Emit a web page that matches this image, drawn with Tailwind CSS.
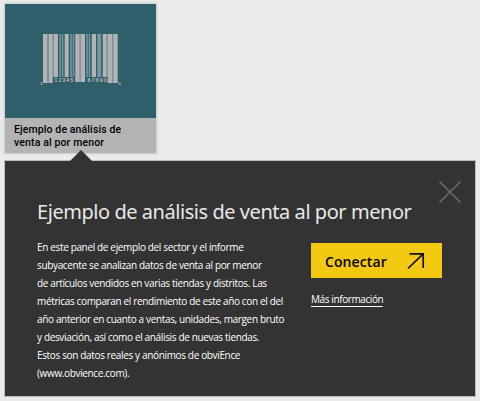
<!DOCTYPE html>
<html lang="es">
<head>
<meta charset="utf-8">
<title>Ejemplo de análisis de venta al por menor</title>
<script src="https://cdn.jsdelivr.net/npm/@tailwindcss/browser@4"></script>
</head>
<body class="h-[401px] w-[480px] overflow-hidden bg-[#eaeaea] pl-[5px] pt-[4px] font-['Open_Sans',sans-serif]">
<article class="h-[149px] w-[151px] bg-[#b3b3b3] shadow-[0_0_2px_1px_#c9cccc]">
  <div class="h-[114px] bg-[#2f5f6b]">
    <svg class="block h-[114px] w-[151px]" viewBox="5 4 151 114">
      <g fill="#7897a0">
        <path d="M47 34h1.7v49H47zM52.7 34H54v43h-1.3zM59.5 34h1.6v43h-1.6zM62 34h1.3v43H62zM70.3 34h1.5v43h-1.5zM72.7 34h1.5v43h-1.5zM86.3 34h1.5v43h-1.5zM88.7 34h1.5v43h-1.5zM97.3 34h3.8v43h-3.8zM79.7 34H81v48h-1.3zM106.7 34h1v43h-1zM112 34h1.3v49H112z"/>
      </g>
      <g fill="#b3b3b3">
        <path d="M43 34h4v49h-4zM48.7 34h4v49h-4zM54 34h4v43h-4zM64.7 34h4v43h-4zM75.3 34h4.4v48h-4.4zM81 34h4v48h-4zM91.8 34h4.2v43h-4.2zM102.7 34h4v43h-4zM107.7 34H112v49h-4.3zM113.3 34h4.4v49h-4.4z"/>
        <g font-family="Liberation Sans, sans-serif" font-size="5.2" stroke="#b3b3b3" stroke-width=".2">
          <text x="40.2" y="85.3" font-size="4">1</text>
          <text x="54.6" y="81.8" textLength="18.5">12345</text>
          <text x="87.6" y="81.8" textLength="19">67890</text>
          <text x="118.6" y="85.3" font-size="4">0</text>
        </g>
      </g>
    </svg>
  </div>
  <h2 class="whitespace-nowrap pl-[9px] pt-[5px] font-[Roboto,sans-serif] text-[10.5px] font-medium leading-[13px] text-black"><span class="tracking-[0.11px]">Ejemplo de análisis de</span><br><span class="tracking-[0.13px]">venta al por menor</span></h2>
</article>
<svg class="relative z-10 ml-[65px] -mt-[4px] block h-[12px] w-[22px]" viewBox="0 0 22 12"><path d="M0 12 11 1l11 11z" fill="#333"/></svg>
<section class="relative h-[235px] w-[470px] bg-[#333] pl-[32px] pt-[37px] text-white shadow-[0_0_0_1px_#bbbdbd]">
  <button aria-label="Cerrar" class="absolute left-[433px] top-[19px]"><svg class="block size-6" viewBox="0 0 24 24"><path d="M1.5 1.5l21 21m0-21l-21 21" fill="none" stroke="#6b6b6b" stroke-width="1.7"/></svg></button>
  <h1 class="h-[28px] whitespace-nowrap font-['Noto_Sans',sans-serif] text-[20px] font-normal leading-[28px] tracking-[-0.45px] text-[#e8e8e8]">Ejemplo de análisis de venta al por menor</h1>
  <div class="flex pt-[12px]">
    <p class="w-[274px] whitespace-nowrap text-[10px] leading-[18px] tracking-[-0.35px]"><span>En este panel de ejemplo del sector y el informe</span><br><span>subyacente se analizan datos de venta al por menor</span><br><span>de artículos vendidos en varias tiendas y distritos. Las</span><br><span>métricas comparan el rendimiento de este año con el del</span><br><span>año anterior en cuanto a ventas, unidades, margen bruto</span><br><span>y desviación, así como el análisis de nuevas tiendas.</span><br><span>Estos son datos reales y anónimos de obviEnce</span><br><span>(www.obvience.com).</span></p>
    <div class="pt-[5px]">
      <button class="flex h-[35px] w-[131px] items-center bg-[#f2c811] pl-[14px] text-[14px] font-semibold text-black"><span class="w-[82px] pt-px text-left tracking-[0.1px]">Conectar</span><svg class="block h-[18px] w-[18px]" viewBox="0 0 18 18" fill="none" stroke="#111" stroke-width="1.7"><path d="M1 16.5 16.2 1.9M2.5 1.9h13.7V16"/></svg></button>
      <a class="mt-[15px] block w-[72px] whitespace-nowrap border-b border-white text-[10px] leading-[13px] tracking-[-0.4px]">Más información</a>
    </div>
  </div>
</section>
</body>
</html>
